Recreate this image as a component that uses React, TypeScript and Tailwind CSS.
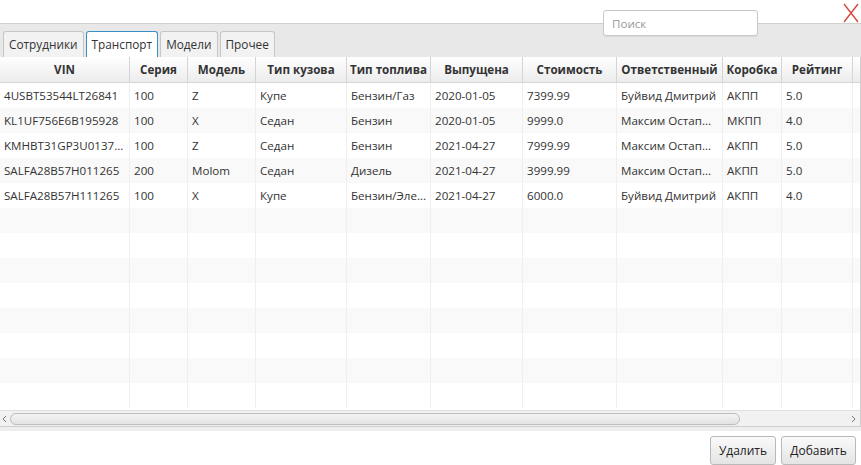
import React from "react";

const COLS = [
  { title: "VIN", w: 130 },
  { title: "Серия", w: 58 },
  { title: "Модель", w: 68 },
  { title: "Тип кузова", w: 91 },
  { title: "Тип топлива", w: 84 },
  { title: "Выпущена", w: 92 },
  { title: "Стоимость", w: 94 },
  { title: "Ответственный", w: 106 },
  { title: "Коробка", w: 59 },
  { title: "Рейтинг", w: 71 },
];

const ROWS: string[][] = [
  ["4USBT53544LT26841", "100", "Z", "Купе", "Бензин/Газ", "2020-01-05", "7399.99", "Буйвид Дмитрий", "АКПП", "5.0"],
  ["KL1UF756E6B195928", "100", "X", "Седан", "Бензин", "2020-01-05", "9999.0", "Максим Остап...", "МКПП", "4.0"],
  ["KMHBT31GP3U0137...", "100", "Z", "Седан", "Бензин", "2021-04-27", "7999.99", "Максим Остап...", "АКПП", "5.0"],
  ["SALFA28B57H011265", "200", "Molom", "Седан", "Дизель", "2021-04-27", "3999.99", "Максим Остап...", "АКПП", "5.0"],
  ["SALFA28B57H111265", "100", "X", "Купе", "Бензин/Эле...", "2021-04-27", "6000.0", "Буйвид Дмитрий", "АКПП", "4.0"],
];

const TABS = ["Сотрудники", "Транспорт", "Модели", "Прочее"];
const EMPTY_ROWS = 8;

function Row({ cells, odd }: { cells: string[]; odd: boolean }) {
  return (
    <div className={`flex h-[25px] ${odd ? "bg-[#f9f9f9]" : "bg-white"}`}>
      {COLS.map((c, i) => (
        <div
          key={c.title}
          style={{ width: c.w }}
          className="shrink-0 border-r border-[#efefef] px-[4px] flex items-center overflow-hidden whitespace-nowrap text-[11.6px] text-[#333]"
        >
          {cells[i] ?? ""}
        </div>
      ))}
      <div className="flex-1" />
    </div>
  );
}

export default function App() {
  return (
    <div className="relative w-[861px] h-[465px] bg-white overflow-hidden font-['Open_Sans',sans-serif] text-[#333]">
      {/* search + close */}
      <input
        placeholder="Поиск"
        className="absolute left-[603px] top-[10px] w-[155px] h-[26px] rounded-[3px] border border-[#c8c8c8] bg-white px-[8px] text-[11.6px] placeholder:text-[#9a9a9a] shadow-[0_1px_1px_rgba(0,0,0,0.06)] z-10"
      />
      <svg className="absolute left-[843px] top-[3px]" width="16" height="20" viewBox="0 0 16 20">
        <path d="M1 1 L15 19 M15 1 L1 19" stroke="#d2493f" strokeWidth="1.4" fill="none" />
      </svg>

      <div className="h-[23px]" />

      {/* tab header band */}
      <div className="h-[34px] bg-[#e8e8e8] border-t border-[#d0d0d0] flex items-end pl-[3px] gap-[2px]">
        {TABS.map((t, i) => (
          <div
            key={t}
            className={`h-[26px] px-[5px] flex items-center text-[11.8px] rounded-t-[3px] border border-b-0 ${
              i === 1
                ? "bg-white border-[#3a8fc4]"
                : "bg-[#f2f2f2] border-[#c6c6c6]"
            }`}
          >
            {t}
          </div>
        ))}
      </div>

      {/* table */}
      <div className="h-[370px] border-b border-r border-[#cfcfcf] flex flex-col">
        <div className="flex h-[26px] shrink-0 bg-gradient-to-b from-white to-[#ececec] border-b border-[#d6d6d6]">
          {COLS.map((c) => (
            <div
              key={c.title}
              style={{ width: c.w }}
              className="shrink-0 border-r border-[#d4d4d4] flex items-center justify-center text-[11.6px] font-bold text-[#333]"
            >
              {c.title}
            </div>
          ))}
          <div className="flex-1" />
        </div>
        <div className="flex-1 overflow-hidden">
          {ROWS.map((r, i) => (
            <Row key={i} cells={r} odd={i % 2 === 1} />
          ))}
          {Array.from({ length: EMPTY_ROWS }).map((_, i) => (
            <Row key={`e${i}`} cells={[]} odd={(i + ROWS.length) % 2 === 1} />
          ))}
        </div>
        {/* horizontal scrollbar */}
        <div className="h-[16px] shrink-0 bg-[#f1f1f1] border-t border-[#e0e0e0] flex items-center">
          <svg width="10" height="16" viewBox="0 0 10 16" className="shrink-0">
            <path d="M6 5 L3 8 L6 11" stroke="#777" strokeWidth="1" fill="none" />
          </svg>
          <div className="w-[730px] h-[12px] rounded-[6px] border border-[#bdbdbd] bg-gradient-to-b from-[#f4f4f4] to-[#e2e2e2]" />
          <div className="flex-1" />
          <svg width="10" height="16" viewBox="0 0 10 16" className="shrink-0 mr-[2px]">
            <path d="M4 5 L7 8 L4 11" stroke="#777" strokeWidth="1" fill="none" />
          </svg>
        </div>
      </div>

      {/* bottom buttons */}
      <div className="h-[4px] bg-[#eeeeee]" />
      <div className="flex justify-end gap-[5px] pr-[5px] pt-[5px]">
        <button className="h-[29px] w-[66px] rounded-[3px] border border-[#b9b9b9] bg-gradient-to-b from-[#fafafa] to-[#e4e4e4] text-[12px] text-[#222]">
          Удалить
        </button>
        <button className="h-[29px] w-[75px] rounded-[3px] border border-[#b9b9b9] bg-gradient-to-b from-[#fafafa] to-[#e4e4e4] text-[12px] text-[#222]">
          Добавить
        </button>
      </div>
    </div>
  );
}
